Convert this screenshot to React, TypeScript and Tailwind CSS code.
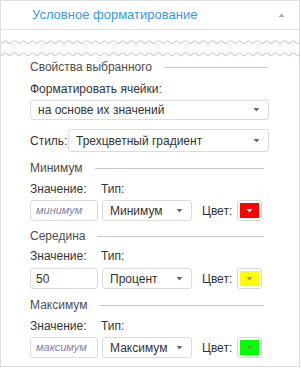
import React from "react";

const font = { fontFamily: '"Liberation Sans", Arial, sans-serif' };

function Arrow({ color = "#6b6b6b" }: { color?: string }) {
  return (
    <svg width="7" height="4" viewBox="0 0 7 4" className="shrink-0">
      <path d="M0.5 0 H6.5 L3.5 3.5 Z" fill={color} />
    </svg>
  );
}

function Select({ text, w, h = 21 }: { text: string; w?: string; h?: number }) {
  return (
    <div
      className={`flex items-center justify-between border border-[#dcdcdc] rounded-[3px] bg-white pl-[7px] pr-[8px] text-[12px] text-[#333] ${w ?? "flex-1"}`}
      style={{ height: h }}
    >
      <span>{text}</span>
      <Arrow />
    </div>
  );
}

function Section({ title, end = 264 }: { title: string; end?: number }) {
  return (
    <div className="flex items-center h-[14px] text-[12px] text-[#4d4d4d]">
      <span>{title}</span>
      <div className="flex-1 h-px bg-[#c8c8c8] ml-[12px]" style={{ marginRight: 269 - end }} />
    </div>
  );
}

function ColorBox({ color, arrow }: { color: string; arrow: string }) {
  return (
    <div className="ml-[5px] w-[25px] h-[21px] border border-[#d6d6d6] rounded-[3px] p-[2px] bg-white">
      <div className="w-full h-full flex items-center justify-center" style={{ background: color }}>
        <Arrow color={arrow} />
      </div>
    </div>
  );
}

function Row({
  value,
  placeholder,
  type,
  color,
  arrow,
}: {
  value?: string;
  placeholder?: string;
  type: string;
  color: string;
  arrow: string;
}) {
  return (
    <div className="flex items-center">
      <div className="w-[68px] h-[21px] border border-[#dcdcdc] rounded-[3px] flex items-center px-[5px] text-[12px] text-[#333]">
        {value ? (
          <span>{value}</span>
        ) : (
          <span className="italic text-[11px] text-[#7f7fa8]">{placeholder}</span>
        )}
      </div>
      <Select text={type} w="w-[90px] ml-[4px]" />
      <span className="ml-[10px] text-[12px] text-[#333]">Цвет:</span>
      <ColorBox color={color} arrow={arrow} />
    </div>
  );
}

function Labels() {
  return (
    <div className="flex h-[14px] items-center text-[12px] text-[#333]">
      <span className="w-[71px]">Значение:</span>
      <span>Тип:</span>
    </div>
  );
}

function Zigzag() {
  const pts: string[] = [];
  for (let i = 0; i * 4.5 <= 302; i++) {
    pts.push(`${i * 4.5},${i % 2 === 0 ? 4 : 0.5}`);
  }
  return (
    <svg width="298" height="5" viewBox="0 0 298 5" className="block">
      <polyline points={pts.join(" ")} fill="none" stroke="#c4c4c4" strokeWidth="1" />
    </svg>
  );
}

export default function App() {
  return (
    <div className="w-[301px] h-[368px] bg-white" style={font}>
      <div className="w-[300px] h-[367px] border border-[#dedede] flex flex-col">
        <div className="h-[29px] shrink-0 border-b border-[#dedede] flex items-center pl-[31px] pr-[14px] justify-between">
          <span className="text-[13px] text-[#3a97dc]">Условное форматирование</span>
          <svg width="7" height="4" viewBox="0 0 7 4">
            <path d="M0.5 4 H6.5 L3.5 0.5 Z" fill="#a8a8a8" />
          </svg>
        </div>
        <div className="h-[30px] shrink-0 flex flex-col pt-[10px] gap-[7px]">
          <Zigzag />
          <Zigzag />
        </div>
        <div className="pl-[29px] pr-[30px] flex flex-col">
          <Section title="Свойства выбранного" end={268} />
          <div className="mt-[8px] h-[14px] flex items-center text-[12px] text-[#333]">Форматировать ячейки:</div>
          <div className="mt-[4px] flex">
            <Select text="на основе их значений" h={20} />
          </div>
          <div className="mt-[9px] flex items-center">
            <span className="text-[12px] text-[#333] w-[38px]">Стиль:</span>
            <Select text="Трехцветный градиент" h={23} />
          </div>
          <div className="mt-[9px]">
            <Section title="Минимум" />
          </div>
          <div className="mt-[7px]">
            <Labels />
          </div>
          <div className="mt-[4px]">
            <Row placeholder="минимум" type="Минимум" color="#ff0000" arrow="#ffffff" />
          </div>
          <div className="mt-[8px]">
            <Section title="Середина" />
          </div>
          <div className="mt-[6px]">
            <Labels />
          </div>
          <div className="mt-[5px]">
            <Row value="50" type="Процент" color="#ffff00" arrow="#9a9a6a" />
          </div>
          <div className="mt-[9px]">
            <Section title="Максимум" />
          </div>
          <div className="mt-[7px]">
            <Labels />
          </div>
          <div className="mt-[4px]">
            <Row placeholder="максимум" type="Максимум" color="#00ff00" arrow="#7a8a7a" />
          </div>
        </div>
      </div>
    </div>
  );
}
